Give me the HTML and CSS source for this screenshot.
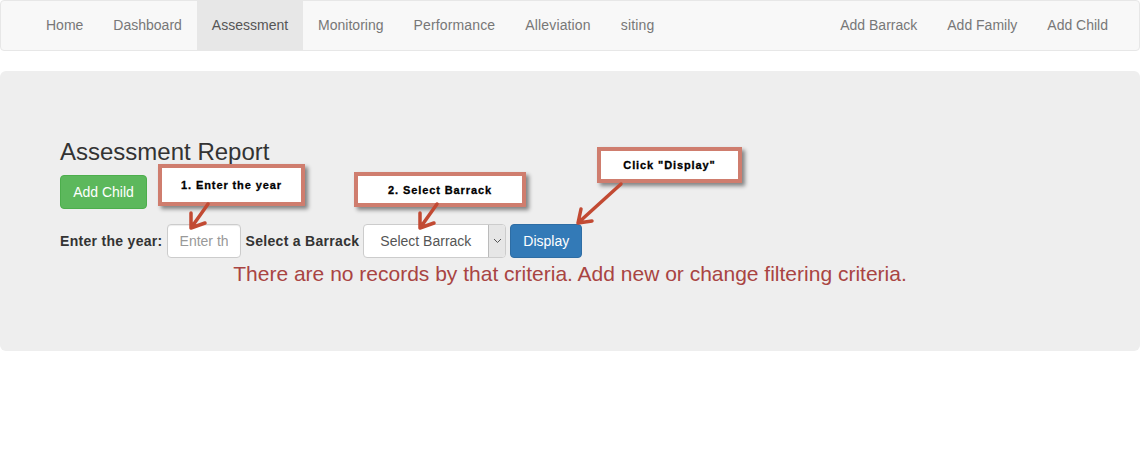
FILE: index.html
```html
<!DOCTYPE html>
<html>
<head>
<meta charset="utf-8">
<link rel="stylesheet" href="styles.css">
</head>
<body>
<nav class="navbar">
  <ul class="nav nav-left">
    <li><a href="#">Home</a></li>
    <li><a href="#">Dashboard</a></li>
    <li class="active"><a href="#">Assessment</a></li>
    <li><a href="#">Monitoring</a></li>
    <li><a href="#">Performance</a></li>
    <li><a href="#">Alleviation</a></li>
    <li><a href="#">siting</a></li>
  </ul>
  <ul class="nav nav-right">
    <li><a href="#">Add Barrack</a></li>
    <li><a href="#">Add Family</a></li>
    <li><a href="#">Add Child</a></li>
  </ul>
</nav>

<div class="jumbotron">
  <h3 class="title">Assessment Report</h3>
  <button class="btn btn-success">Add Child</button>
  <div class="filter">
    <label class="lbl">Enter the year:</label>
    <input class="input" type="text" placeholder="Enter the year">
    <label class="lbl">Select a Barrack</label>
    <div class="select"><span class="select-text">Select Barrack</span><span class="select-arrow"><svg width="9" height="6" viewBox="0 0 9 6"><path d="M1 1 L4.5 4.5 L8 1" fill="none" stroke="#555" stroke-width="1"/></svg></span></div>
    <button class="btn btn-primary">Display</button>
  </div>
  <p class="danger">There are no records by that criteria. Add new or change filtering criteria.</p>
</div>

<div class="callout c1">1. Enter the year</div>
<div class="callout c2">2. Select Barrack</div>
<div class="callout c3">Click "Display"</div>

<svg class="arrows" width="1141" height="466" viewBox="0 0 1141 466">
  <g fill="none" stroke="#c24a33" stroke-width="3.5" stroke-linecap="round" stroke-linejoin="round">
    <path d="M208 204 L191 228 M205 223 L191 228 L191 213"/>
    <path d="M437 204 L420 228 M434 223 L420 228 L420 213"/>
    <path d="M621 184 L578 223 M592 221 L578 223 L581 209"/>
  </g>
</svg>
</body>
</html>
```
FILE: styles.css
```css
* { box-sizing: border-box; }
html, body { margin: 0; padding: 0; }
body {
  font-family: "Liberation Sans", Arial, sans-serif;
  font-size: 14px;
  line-height: 20px;
  color: #333;
  background: #fff;
  width: 1141px;
  height: 466px;
  position: relative;
  overflow: hidden;
  padding-right: 1px;
}
.navbar {
  display: flex;
  justify-content: space-between;
  height: 51px;
  background: #f8f8f8;
  border: 1px solid #e7e7e7;
  border-radius: 4px;
  margin-bottom: 20px;
  padding: 0 16px 0 30px;
}
.nav {
  list-style: none;
  margin: 0;
  padding: 0;
  display: flex;
}
.nav a {
  display: block;
  padding: 14px 15px 15px;
  line-height: 20px;
  color: #777;
  text-decoration: none;
}
.nav-left li:nth-child(n+5) a { letter-spacing: 0.15px; }
.nav .active a {
  background: #e7e7e7;
  color: #555;
}
.jumbotron {
  background: #eee;
  border-radius: 6px;
  height: 280px;
  padding: 48px 60px 0;
}
.title {
  margin: 20px 0 10px;
  font-size: 24px;
  font-weight: 500;
  line-height: 26px;
  color: #333;
}
.btn {
  font-family: "Liberation Sans", Arial, sans-serif;
  font-size: 14px;
  line-height: 20px;
  padding: 6px 12px;
  border-radius: 4px;
  border: 1px solid transparent;
  color: #fff;
  height: 34px;
}
.btn-success {
  background: #5cb85c;
  border-color: #4cae4c;
  width: 87px;
}
.btn-primary {
  background: #337ab7;
  border-color: #2e6da4;
  width: 72px;
  margin-left: 4px;
}
.filter {
  display: flex;
  align-items: center;
  margin-top: 15px;
  height: 34px;
}
.lbl {
  font-weight: bold;
  margin-right: 4px;
  letter-spacing: 0.3px;
}
.input {
  width: 74px;
  height: 34px;
  border: 1px solid #ccc;
  border-radius: 4px;
  padding: 6px 12px;
  font-family: "Liberation Sans", Arial, sans-serif;
  font-size: 14px;
  background: #fff;
  margin-right: 5px;
  box-shadow: inset 0 1px 1px rgba(0,0,0,.075);
}
.input::placeholder { color: #999; }
.select {
  display: flex;
  width: 143px;
  height: 34px;
  border: 1px solid #ccc;
  border-radius: 4px;
  background: #fff;
  overflow: hidden;
}
.select-text {
  flex: 1;
  padding: 6px 0 6px 16px;
  color: #555;
}
.select-arrow {
  width: 17px;
  background: #e6e6e6;
  border-left: 1px solid #bbb;
  display: flex;
  align-items: center;
  justify-content: center;
}
.danger {
  margin: 3px 0 0;
  text-align: center;
  color: #a94442;
  font-size: 21px;
  line-height: 26px;
}
.callout {
  position: absolute;
  background: #fff;
  border: 4px solid #cf7d6e;
  box-shadow: 3px 3px 4px rgba(0,0,0,.45);
  font-family: "Liberation Sans", Arial, sans-serif;
  font-weight: bold;
  font-size: 11px;
  letter-spacing: 0.9px;
  -webkit-text-stroke: 0.3px #000;
  color: #000;
  display: flex;
  align-items: center;
  justify-content: center;
}
.c1 { left: 158px; top: 164px; width: 147px; height: 42px; }
.c2 { left: 354px; top: 172px; width: 172px; height: 35px; }
.c3 { left: 597px; top: 147px; width: 145px; height: 36px; }
.arrows {
  position: absolute;
  left: 0;
  top: 0;
  pointer-events: none;
}
```
